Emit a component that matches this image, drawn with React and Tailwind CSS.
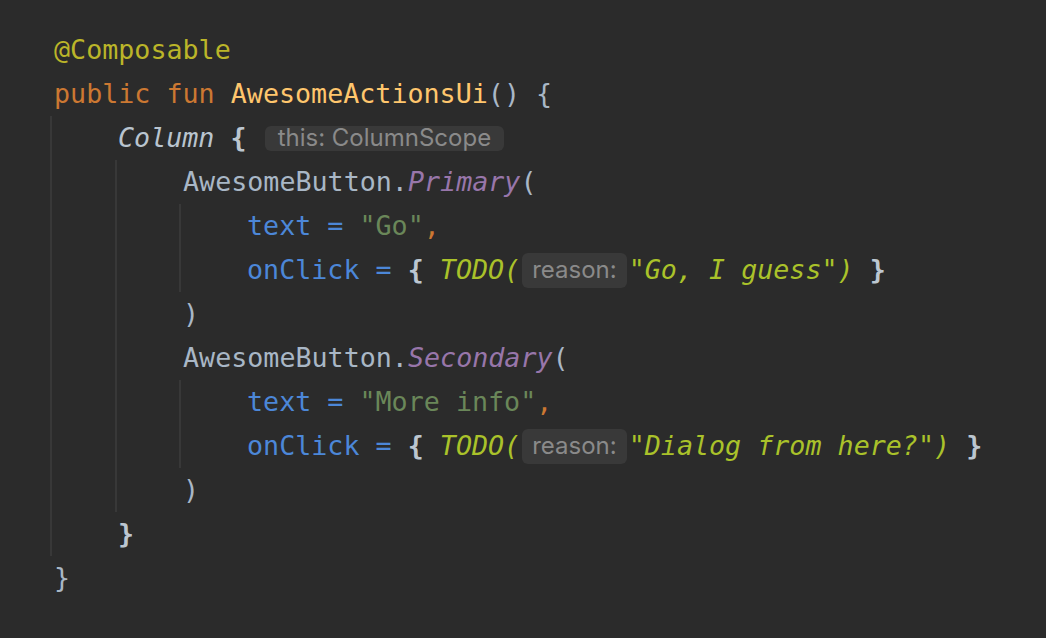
import React from "react";

const mono = "font-['DejaVu_Sans_Mono','Liberation_Mono',monospace]";

const Line = ({ pad = "pl-[4px]", children }) => (
  <div className={`h-[44px] flex items-center whitespace-pre ${pad}`}>{children}</div>
);

const Hint = ({ children, tall }) => (
  <span
    className={`inline-flex items-center rounded-[6px] bg-[#393939] text-[#8a8a8a] font-['Inter','Noto_Sans',sans-serif] not-italic font-normal mx-[2px] ${
      tall ? "h-[35px] text-[24px] px-[10px]" : "h-[25px] text-[24px] px-[13px]"
    }`}
  >
    {children}
  </span>
);

const Brace = ({ children }) => <span className="font-bold text-[#bcc6d0]">{children}</span>;

const Plain = ({ children }) => <span className="text-[#a9b7c6]">{children}</span>;
const Arg = ({ children }) => <span className="text-[#4c87d8]">{children}</span>;
const Str = ({ children }) => <span className="text-[#6a8759]">{children}</span>;
const Comma = () => <span className="text-[#cc7832]">,</span>;
const Todo = ({ children }) => <span className="italic text-[#aac22a]">{children}</span>;
const Member = ({ children }) => <span className="italic text-[#9876aa]">{children}</span>;

const ClickLine = ({ reason }) => (
  <Line pad="pl-[66px]">
    <Arg>onClick = </Arg>
    <Brace>{"{"}</Brace>
    <Plain> </Plain>
    <Todo>TODO(</Todo>
    <Hint tall>reason:</Hint>
    <Todo>{`"${reason}")`}</Todo>
    <Plain> </Plain>
    <Brace>{"}"}</Brace>
  </Line>
);

const App = () => {
  return (
    <div className={`w-full min-h-screen bg-[#2b2b2b] pt-[28px] pl-[50px] text-[26.7px] leading-none ${mono}`}>
      <Line>
        <span className="text-[#bbb529]">@Composable</span>
      </Line>
      <Line>
        <span className="text-[#cc7832]">public fun </span>
        <span className="text-[#ffc66d]">AwesomeActionsUi</span>
        <Plain>() {"{"}</Plain>
      </Line>

      <div className="border-l-2 border-[#383838]">
        <Line pad="pl-[66px]">
          <span className="italic text-[#b9c4cf]">Column </span>
          <Brace>{"{"}</Brace>
          <Plain> </Plain>
          <Hint>this: ColumnScope</Hint>
        </Line>

        <div className="ml-[63px] border-l-2 border-[#383838]">
          <Line pad="pl-[66px]">
            <Plain>AwesomeButton.</Plain>
            <Member>Primary</Member>
            <Plain>(</Plain>
          </Line>
          <div className="ml-[62px] border-l-2 border-[#383838]">
            <Line pad="pl-[66px]">
              <Arg>text = </Arg>
              <Str>"Go"</Str>
              <Comma />
            </Line>
            <ClickLine reason="Go, I guess" />
          </div>
          <Line pad="pl-[66px]">
            <Plain>)</Plain>
          </Line>
          <Line pad="pl-[66px]">
            <Plain>AwesomeButton.</Plain>
            <Member>Secondary</Member>
            <Plain>(</Plain>
          </Line>
          <div className="ml-[62px] border-l-2 border-[#383838]">
            <Line pad="pl-[66px]">
              <Arg>text = </Arg>
              <Str>"More info"</Str>
              <Comma />
            </Line>
            <ClickLine reason="Dialog from here?" />
          </div>
          <Line pad="pl-[66px]">
            <Plain>)</Plain>
          </Line>
        </div>

        <Line pad="pl-[66px]">
          <Brace>{"}"}</Brace>
        </Line>
      </div>

      <Line>
        <Plain>{"}"}</Plain>
      </Line>
    </div>
  );
};

export default App;
